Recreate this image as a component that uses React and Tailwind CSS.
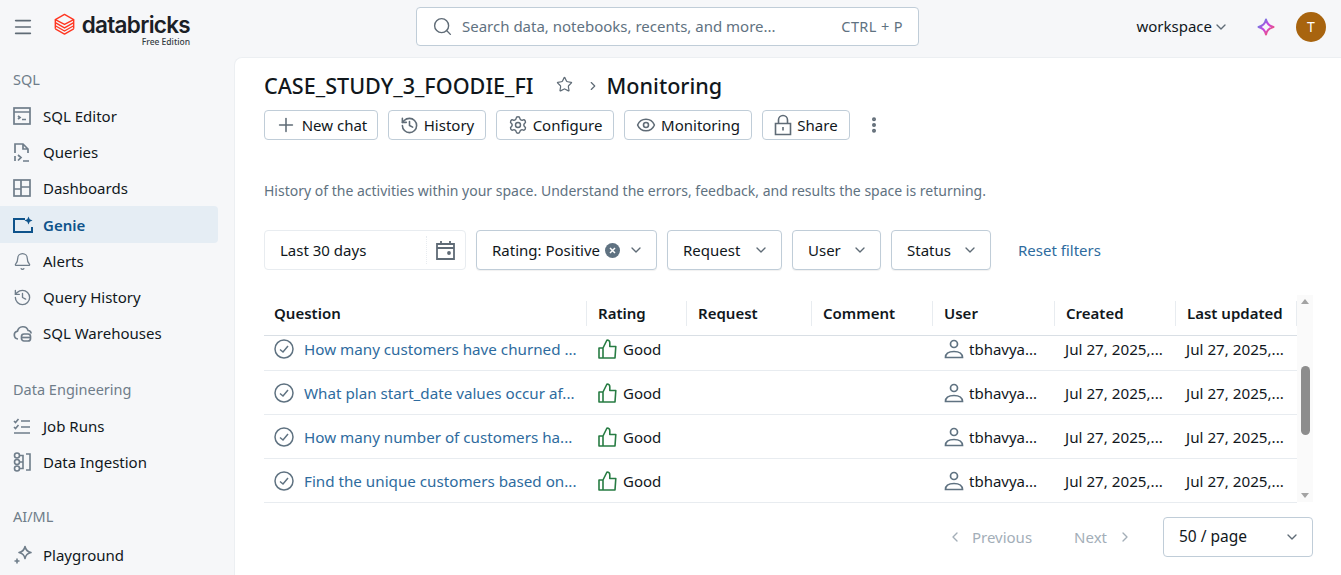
import { Menu, Search, ChevronDown, ChevronLeft, ChevronRight, Star, Plus, History, Settings, Eye, EllipsisVertical, Bell } from 'lucide-react';

const font = { fontFamily: '"Noto Sans", sans-serif' };

function Logo() {
  return (
    <svg width="21" height="22" viewBox="0 0 24 25" fill="none" stroke="#ff3621" strokeWidth="1.6" strokeLinejoin="round">
      <path d="M12 1.500 L22.500 7.500 L12 13 L1.500 7.500 Z" />
      <path d="M1.500 11 L12 17 L22.500 11" />
      <path d="M1.500 14.500 L12 20.500 L22.500 14.500" />
      <path d="M1.500 18 L12 24 L22.500 18" />
      <path d="M1.500 7.500 V18 M22.500 7.500 V18" />
    </svg>
  );
}

function EditorIcon() {
  return (
    <svg width="18" height="18" viewBox="0 0 18 18" fill="none" stroke="currentColor" strokeWidth="1.7">
      <rect x="1" y="1" width="16" height="16" />
      <path d="M1 5h16M5 9l2 1.500L5 12M9 12.500h4" />
    </svg>
  );
}

function QueriesIcon() {
  return (
    <svg width="18" height="19" viewBox="0 0 18 19" fill="none" stroke="currentColor" strokeWidth="1.7">
      <path d="M2 10V1h8l5 5v4M10 1v5h5M2 13v5M5 12l3 2.500L5 17.500M10 18h6" />
    </svg>
  );
}

function DashIcon() {
  return (
    <svg width="18" height="18" viewBox="0 0 18 18" fill="none" stroke="currentColor" strokeWidth="1.7">
      <rect x="1" y="1" width="16" height="16" />
      <path d="M8 1v16M8 8h9M1 10h7" />
    </svg>
  );
}

function GenieIcon() {
  return (
    <svg width="20" height="18" viewBox="0 0 20 18" fill="none" stroke="currentColor" strokeWidth="2">
      <path d="M12 3H1v13h18v-5" />
      <path d="M15.500 0.500l1.200 2.800 2.800 1.200-2.800 1.200-1.200 2.800-1.200-2.800-2.800-1.200 2.800-1.200z" fill="currentColor" stroke="none" />
    </svg>
  );
}

function WarehouseIcon() {
  return (
    <svg width="20" height="18" viewBox="0 0 20 18" fill="none" stroke="currentColor" strokeWidth="1.7">
      <path d="M5 15a4 4 0 0 1-.5-7.900 5.500 5.500 0 0 1 10.600-.6 3 3 0 0 1 3 3" />
      <rect x="8.500" y="10" width="9" height="7" rx="2.500" />
      <path d="M8.500 13.500h9" />
    </svg>
  );
}

function JobIcon() {
  return (
    <svg width="18" height="18" viewBox="0 0 18 18" fill="none" stroke="currentColor" strokeWidth="1.6">
      <path d="M1 4l1.500 1.500L5.500 2M1 10l1.500 1.500L5.500 8M8 4h9M8 10h9M1 16h16" />
    </svg>
  );
}

function IngestIcon() {
  return (
    <svg width="18" height="20" viewBox="0 0 18 20" fill="none" stroke="currentColor" strokeWidth="1.6">
      <circle cx="4" cy="3.500" r="2.500" />
      <circle cx="4" cy="16.500" r="2.500" />
      <circle cx="4" cy="10" r="2.500" />
      <path d="M6.500 3.500H10v13H6.500M6.500 10H10M13 2h4v16h-4" />
    </svg>
  );
}

function PlaygroundIcon() {
  return (
    <svg width="20" height="20" viewBox="0 0 20 20" fill="none" stroke="currentColor" strokeWidth="1.6" strokeLinejoin="round">
      <path d="M12 1.500c.7 3.600 2.400 5.300 6 6-3.600.7-5.300 2.400-6 6-.7-3.600-2.400-5.300-6-6 3.600-.7 5.300-2.400 6-6z" />
      <path d="M4 13.500v5M1.500 16h5" />
    </svg>
  );
}

function LockIcon() {
  return (
    <svg width="18" height="22" viewBox="0 0 18 22" fill="none" stroke="currentColor" strokeWidth="1.6">
      <path d="M1.500 9.500h15v11h-15zM4.500 9.500V6a4.500 4.500 0 0 1 9 0v3.500M9 13v3.500" />
    </svg>
  );
}

function CircleOk() {
  return (
    <svg width="20" height="20" viewBox="0 0 20 20" fill="none" stroke="#5f7281" strokeWidth="1.500" className="shrink-0">
      <circle cx="10" cy="10" r="9" />
      <path d="M6 10.500l3 2.500 5-6" />
    </svg>
  );
}

function ThumbIcon() {
  return (
    <svg width="20" height="20" viewBox="0 0 20 20" fill="none" stroke="#277c43" strokeWidth="1.600" strokeLinejoin="round" className="shrink-0 mt-[-2px]">
      <path d="M1 9h4v10H1zM5 9l4-8c1.800 0 2.800 1 2.800 2.800V7.500h6L17 19H5" />
    </svg>
  );
}

function UserIcon() {
  return (
    <svg width="20" height="20" viewBox="0 0 20 20" fill="none" stroke="#5f7281" strokeWidth="1.700" className="shrink-0 mt-[-2px]">
      <circle cx="10" cy="5" r="3.500" />
      <path d="M1.500 18.500c0-3.500 3-6 8.500-6s8.500 2.500 8.500 6z" />
    </svg>
  );
}

function AssistantIcon() {
  return (
    <svg width="18" height="18" viewBox="0 0 18 18" fill="none" strokeWidth="2">
      <defs>
        <linearGradient id="ai" x1="0" y1="0" x2="1" y2="1">
          <stop offset="0" stopColor="#4299e0" />
          <stop offset="0.5" stopColor="#ca42e0" />
          <stop offset="1" stopColor="#ff5f46" />
        </linearGradient>
      </defs>
      <path d="M9 1.500 C10 6 12 8 16.500 9 C12 10 10 12 9 16.500 C8 12 6 10 1.500 9 C6 8 8 6 9 1.500 Z" stroke="url(#ai)" strokeLinejoin="round" />
    </svg>
  );
}

function NavItem({ icon, label, active }) {
  return (
    <div className={`flex items-center pl-[13px] w-[218px] rounded-r-[4px] ${active ? 'h-[37px] pt-[1px] bg-[#e5edf4] text-[#0e538b] font-semibold' : 'h-[36px] text-[#11171c]'}`}>
      <span className={`w-[30px] flex shrink-0 ${active ? 'text-[#0e538b]' : 'text-[#6f7d8a]'}`}>{icon}</span>
      <span className="text-[15px]">{label}</span>
    </div>
  );
}

function Section({ title, children, className, listClass }) {
  return (
    <div className={className}>
      <div className="text-[14.5px] text-[#6f7d8a] pl-[13px] h-[24px] leading-[24px]">{title}</div>
      <div className={`flex flex-col ${listClass}`}>{children}</div>
    </div>
  );
}

function Sidebar() {
  return (
    <aside className="w-[234px] shrink-0 pt-[10px]">
      <Section title="SQL" listClass="mt-[7px]">
        <NavItem icon={<EditorIcon />} label="SQL Editor" />
        <NavItem icon={<QueriesIcon />} label="Queries" />
        <NavItem icon={<DashIcon />} label="Dashboards" />
        <NavItem icon={<GenieIcon />} label="Genie" active />
        <NavItem icon={<Bell size={19} strokeWidth={1.6} />} label="Alerts" />
        <NavItem icon={<History size={19} strokeWidth={1.7} />} label="Query History" />
        <NavItem icon={<WarehouseIcon />} label="SQL Warehouses" />
      </Section>
      <Section title="Data Engineering" className="mt-[26px]" listClass="mt-[7px]">
        <NavItem icon={<JobIcon />} label="Job Runs" />
        <NavItem icon={<IngestIcon />} label="Data Ingestion" />
      </Section>
      <Section title="AI/ML" className="mt-[24px]" listClass="mt-[9px]">
        <NavItem icon={<PlaygroundIcon />} label="Playground" />
      </Section>
    </aside>
  );
}

function TopBar() {
  return (
    <header className="h-[53px] mb-[4px] flex items-center shrink-0">
      <Menu size={22} strokeWidth={1.8} className="ml-[12px] text-[#5f6b76]" />
      <div className="ml-[20px] mb-[5px] flex"><Logo /></div>
      <div className="ml-[9px] w-[106px] flex flex-col items-end mt-[7px]">
        <span className="text-[22.5px] leading-[22px] font-semibold text-[#1b2026] tracking-[-0.7px]" style={{ fontFamily: 'Inter, sans-serif' }}>databricks</span>
        <span className="text-[8.5px] leading-[11px] text-[#333b42] font-medium">Free Edition</span>
      </div>
      <div className="ml-[226px] w-[503px] h-[39px] border border-[#c0cdd8] rounded-[4px] bg-white flex items-center pl-[15px] pr-[15px]">
        <Search size={21} strokeWidth={1.6} className="text-[#5f6b76]" />
        <span className="ml-[9px] text-[15px] text-[#5f7281]">Search data, notebooks, recents, and more...</span>
        <span className="ml-auto text-[14.5px] tracking-[0.4px] text-[#5f7281]">CTRL + P</span>
      </div>
      <div className="ml-auto flex items-center pr-[15px]">
        <span className="text-[15px] text-[#11171c]">workspace</span>
        <ChevronDown size={16} className="ml-[1px] text-[#5f6b76]" />
        <span className="ml-[28px] flex"><AssistantIcon /></span>
        <span className="ml-[21px] w-[30px] h-[30px] rounded-full bg-[#a8640f] text-white text-[14px] flex items-center justify-center">T</span>
      </div>
    </header>
  );
}

function ActionButton({ icon, label, width }) {
  return (
    <button className={`h-[30px] ${width} border border-[#c0cdd8] rounded-[4px] flex items-center justify-center gap-[5px] text-[15px] text-[#11171c] bg-white`}>
      <span className="text-[#5f6b76] flex">{icon}</span>
      {label}
    </button>
  );
}

function FilterButton({ label, width, clear }) {
  return (
    <button className={`h-[40px] ${width} border border-[#c0cdd8] rounded-[4px] flex items-center pl-[15px] pr-[12px] text-[15px] text-[#11171c] bg-white shadow-[0_1px_1px_rgba(0,0,0,0.06)]`}>
      <span>{label}</span>
      {clear && (
        <span className="ml-[5px] w-[15px] h-[15px] rounded-full bg-[#5f7281] text-white flex items-center justify-center">
          <svg width="7" height="7" viewBox="0 0 7 7" stroke="currentColor" strokeWidth="1.500"><path d="M1 1l5 5M6 1L1 6" /></svg>
        </span>
      )}
      <ChevronDown size={16} className="ml-auto text-[#5f6b76]" />
    </button>
  );
}

const columns = [
  { label: 'Question', w: 'w-[323px]' },
  { label: 'Rating', w: 'w-[100px]' },
  { label: 'Request', w: 'w-[125px]' },
  { label: 'Comment', w: 'w-[121px]' },
  { label: 'User', w: 'w-[122px]' },
  { label: 'Created', w: 'w-[121px]' },
  { label: 'Last updated', w: 'w-[121px]' },
];

const questions = [
  'How many customers have churned ...',
  'What plan start_date values occur af...',
  'How many number of customers ha...',
  'Find the unique customers based on...',
];

function Row({ q, first }) {
  return (
    <div className={`flex h-[44px] items-center pt-[2px] border-b border-[#e8ecf0] text-[15px] text-[#11171c] ${first ? 'mt-[-9px]' : ''}`}>
      <div className="w-[323px] pl-[10px] flex items-center gap-[10px]">
        <CircleOk />
        <span className="text-[15.2px] text-[#2e6b9e] whitespace-nowrap">{q}</span>
      </div>
      <div className="w-[100px] pl-[11px] flex items-center gap-[5px]"><ThumbIcon /><span>Good</span></div>
      <div className="w-[125px]" />
      <div className="w-[121px]" />
      <div className="w-[122px] pl-[11px] flex items-center gap-[5px]"><UserIcon /><span>tbhavya...</span></div>
      <div className="w-[121px] pl-[10px] text-[15.2px] whitespace-nowrap">Jul 27, 2025,...</div>
      <div className="w-[121px] pl-[10px] text-[15.2px] whitespace-nowrap">Jul 27, 2025,...</div>
    </div>
  );
}

function Scrollbar() {
  return (
    <div className="w-[16px] h-[207px] bg-[#fafafa] flex flex-col items-center">
      <span className="mt-[4px] w-0 h-0 border-x-[4.5px] border-x-transparent border-b-[5px] border-b-[#a3a3a3]" />
      <span className="mt-[62px] w-[9px] h-[69px] rounded-[5px] bg-[#8d8d8d]" />
      <span className="mt-auto mb-[4px] w-0 h-0 border-x-[4.5px] border-x-transparent border-t-[5px] border-t-[#a3a3a3]" />
    </div>
  );
}

function Table() {
  return (
    <div className="mt-[25px] flex h-[207px]">
      <div className="w-[1033px]">
        <div className="flex h-[41px] items-center pb-[4px] border-b border-[#d9dfe5]">
          {columns.map((c, i) => (
            <div key={c.label} className={`${c.w} h-[25px] flex items-center text-[15px] font-semibold text-[#11171c] border-r border-[#e8ecf0] ${i === 0 ? 'pl-[10px]' : 'pl-[11px]'}`}>
              {c.label}
            </div>
          ))}
        </div>
        <div className="h-[167px] overflow-hidden">
          {questions.map((q, i) => <Row key={q} q={q} first={i === 0} />)}
        </div>
      </div>
      <Scrollbar />
    </div>
  );
}

function Main() {
  return (
    <main className="flex-1 bg-white rounded-tl-[8px] border-l border-t border-[#eceff2] pl-[29px] pt-[11px] min-w-0">
      <div className="flex items-center h-[34px] text-[#11171c]">
        <h1 className="text-[21.6px] font-medium">CASE_STUDY_3_FOODIE_FI</h1>
        <Star size={17} strokeWidth={1.7} className="ml-[22px] text-[#5f6b76] mt-[-4px]" />
        <ChevronRight size={14} className="ml-[13px] text-[#5f6b76]" />
        <span className="ml-[7px] text-[21.6px] font-medium">Monitoring</span>
      </div>
      <div className="mt-[7px] flex items-center gap-[10px]">
        <ActionButton icon={<Plus size={22} strokeWidth={1.7} />} label="New chat" width="w-[114px]" />
        <ActionButton icon={<History size={19} strokeWidth={2} />} label="History" width="w-[98px]" />
        <ActionButton icon={<Settings size={20} strokeWidth={1.7} />} label="Configure" width="w-[118px]" />
        <ActionButton icon={<Eye size={20} strokeWidth={1.9} />} label="Monitoring" width="w-[128px]" />
        <ActionButton icon={<LockIcon />} label="Share" width="w-[88px]" />
        <EllipsisVertical size={20} strokeWidth={2.8} className="ml-[4px] text-[#5f6b76]" />
      </div>
      <p className="mt-[41px] text-[14px] leading-[20px] text-[#5f7281]">
        History of the activities within your space. Understand the errors, feedback, and results the space is returning.
      </p>
      <div className="mt-[29px] flex items-center gap-[10px]">
        <div className="w-[202px] h-[40px] border border-[#e8ecf0] rounded-[4px] flex items-center text-[15px] text-[#11171c]">
          <span className="w-[162px] pl-[15px] border-r border-dotted border-[#e8ecf0] h-[28px] flex items-center">Last 30 days</span>
          <svg width="19" height="20" viewBox="0 0 19 20" fill="none" stroke="#5f6b76" strokeWidth="1.800" className="ml-[9px]">
            <path d="M1 4h17v15H1zM1 8h17M5 1v4M14 1v4" />
            <circle cx="13" cy="13" r="1" fill="#5f6b76" />
          </svg>
        </div>
        <FilterButton label="Rating: Positive" width="w-[181px]" clear />
        <FilterButton label="Request" width="w-[115px]" />
        <FilterButton label="User" width="w-[89px]" />
        <FilterButton label="Status" width="w-[100px]" />
        <span className="ml-[17px] text-[15px] text-[#2e6b9e]">Reset filters</span>
      </div>
      <Table />
      <div className="mt-[15px] w-[1049px] flex items-center text-[15px]">
        <ChevronLeft size={16} className="ml-auto text-[#a3aeb8]" />
        <span className="ml-[9px] text-[#a3aeb8]">Previous</span>
        <span className="ml-[42px] text-[#a3aeb8]">Next</span>
        <ChevronRight size={16} className="ml-[10px] text-[#a3aeb8]" />
        <div className="ml-[30px] w-[150px] h-[40px] border border-[#c0cdd8] rounded-[4px] flex items-center pl-[15px] pr-[12px] text-[15.5px] text-[#11171c]">
          50 / page
          <ChevronDown size={16} className="ml-auto text-[#5f6b76]" />
        </div>
      </div>
    </main>
  );
}

export default function App() {
  return (
    <div className="w-[1341px] h-[575px] overflow-hidden bg-[#f6f7f9] flex flex-col" style={font}>
      <TopBar />
      <div className="flex flex-1 min-h-0">
        <Sidebar />
        <Main />
      </div>
    </div>
  );
}
